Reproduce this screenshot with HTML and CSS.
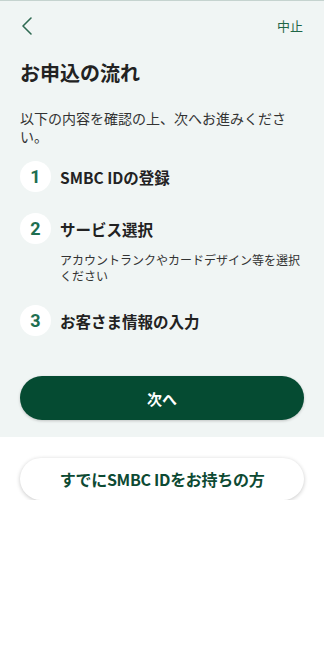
FILE: index.html
```html
<!DOCTYPE html>
<html lang="ja">
<head>
<meta charset="utf-8">
<link rel="stylesheet" href="styles.css">
</head>
<body>
<div class="top">
  <div class="header">
    <svg class="back" width="14" height="20" viewBox="0 0 14 20"><path d="M11 2 L3 10 L11 18" fill="none" stroke="#2f6a52" stroke-width="1.6" stroke-linecap="round" stroke-linejoin="round"/></svg>
    <span class="cancel">中止</span>
  </div>
  <h1 class="title">お申込の流れ</h1>
  <p class="lead">以下の内容を確認の上、次へお進みください。</p>
  <ol class="steps">
    <li class="step">
      <span class="num">1</span>
      <span class="label">SMBC IDの登録</span>
    </li>
    <li class="step">
      <span class="num">2</span>
      <span class="label">サービス選択</span>
      <span class="desc">アカウントランクやカードデザイン等を選択ください</span>
    </li>
    <li class="step">
      <span class="num">3</span>
      <span class="label">お客さま情報の入力</span>
    </li>
  </ol>
  <button class="btn-primary">次へ</button>
</div>
<div class="bottom">
  <button class="btn-secondary">すでにSMBC IDをお持ちの方</button>
</div>
</body>
</html>
```
FILE: styles.css
```css
* { box-sizing: border-box; }
html, body {
  margin: 0;
  padding: 0;
  background: #ffffff;
  font-family: "Noto Sans CJK JP", "Noto Sans", sans-serif;
  color: #222222;
}
.top {
  background: #f0f5f4;
  border-top: 1px solid #c5d3cf;
  padding: 0 20px 17px;
}
.header {
  height: 49px;
  display: flex;
  justify-content: space-between;
  align-items: center;
}
.back { display: block; margin-left: 0; }
.cancel {
  font-size: 13px;
  color: #1f6647;
  margin-right: 1px;
}
.title {
  margin: 9px 0 0;
  font-size: 20px;
  line-height: 28px;
  font-weight: 700;
  color: #222;
}
.lead {
  margin: 22px 0 0;
  font-size: 14px;
  line-height: 18px;
  color: #333;
}
.steps {
  list-style: none;
  margin: 16px 0 0;
  padding: 0;
  display: flex;
  flex-direction: column;
  gap: 21px;
}
.step {
  display: grid;
  grid-template-columns: 31px 1fr;
  column-gap: 9px;
  align-items: center;
}
.num {
  width: 31px;
  height: 31px;
  border-radius: 50%;
  background: #ffffff;
  color: #1e6e50;
  font-family: Roboto, "Noto Sans", sans-serif;
  font-weight: 700;
  font-size: 18px;
  display: flex;
  align-items: center;
  justify-content: center;
}
.label {
  font-size: 15.5px;
  font-weight: 700;
  color: #222;
}
.desc {
  grid-column: 2;
  margin-top: 8px;
  font-size: 12px;
  line-height: 16px;
  color: #333;
}
.btn-primary {
  display: block;
  width: 100%;
  height: 44px;
  margin-top: 40px;
  border: none;
  border-radius: 22px;
  background: #054b32;
  color: #ffffff;
  font-family: "Noto Sans CJK JP", sans-serif;
  font-size: 15px;
  font-weight: 700;
  box-shadow: 0 1px 3px rgba(0,0,0,0.2);
}
.bottom {
  padding: 21px 20px 0;
}
.btn-secondary {
  display: block;
  width: 100%;
  height: 42px;
  border: none;
  border-radius: 21px;
  background: #ffffff;
  color: #0d4a33;
  font-family: "Noto Sans CJK JP", sans-serif;
  font-size: 16px;
  font-weight: 700;
  letter-spacing: -0.3px;
  box-shadow: 0 1px 4px rgba(0,0,0,0.22);
}
```
